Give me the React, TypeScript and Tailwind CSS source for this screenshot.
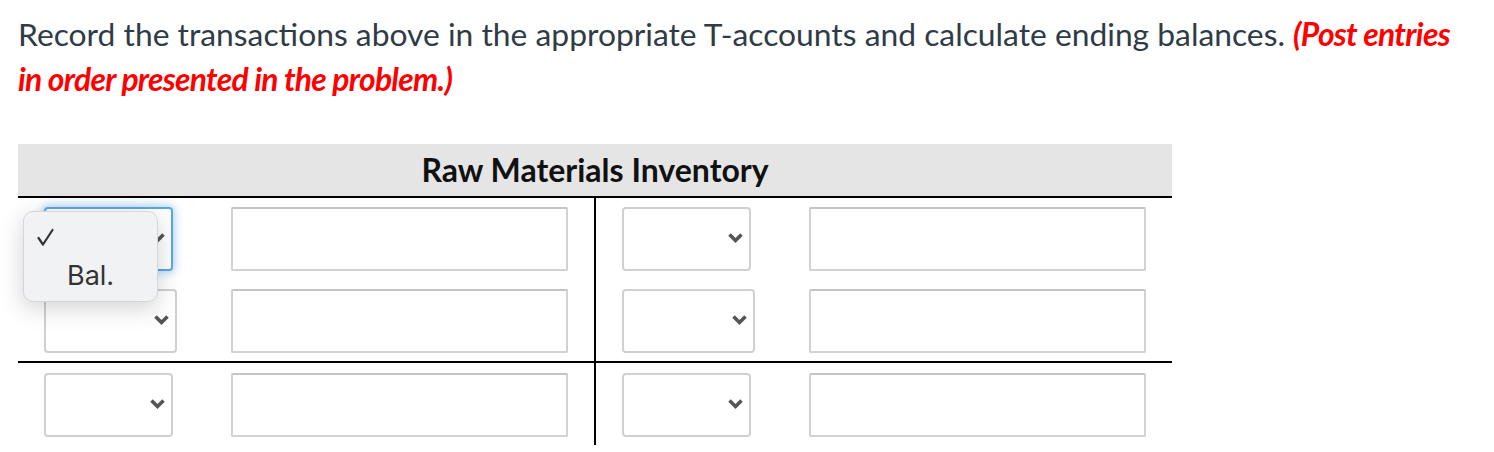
import React from "react";

function Chevron() {
  return (
    <svg width="17" height="12" viewBox="0 0 17 12" className="block">
      <path d="M2.5 2.5 L8.5 8.5 L14.5 2.5" fill="none" stroke="#555" strokeWidth="3.6" strokeLinecap="butt" strokeLinejoin="miter" />
    </svg>
  );
}

function SelectBox({ w = "w-[129px]", focused = false }: { w?: string; focused?: boolean }) {
  return (
    <div
      className={
        focused
          ? `${w} h-[64px] shrink-0 rounded-[4px] border-2 border-[#5aa7e6] bg-white shadow-[0_0_8px_2px_rgba(90,167,230,0.45)] flex items-center justify-end pr-[5px] pb-[2px]`
          : `${w} h-[64px] shrink-0 rounded-[4px] border-2 border-[#d0d0d0] bg-white flex items-center justify-end pr-[5px] pb-[2px]`
      }
    >
      <Chevron />
    </div>
  );
}

function TextBox({ ml }: { ml: string }) {
  return (
    <div className={`${ml} w-[337px] h-[64px] shrink-0 rounded-[2px] border-2 border-[#d2d2d2] border-t-[#c4c4c4] bg-white`} />
  );
}

function Row({ wide = false, focused = false }: { wide?: boolean; focused?: boolean }) {
  return (
    <div className="flex items-start pl-[26px]">
      <SelectBox w={wide ? "w-[133px]" : "w-[129px]"} focused={focused} />
      <TextBox ml={wide ? "ml-[54px]" : "ml-[58px]"} />
    </div>
  );
}

export default function App() {
  return (
    <div className="relative w-[1494px] h-[452px] bg-white overflow-hidden" style={{ fontFamily: "Lato, 'Liberation Sans', sans-serif" }}>
      <p className="ml-[18px] w-[1450px] pt-[12px] text-[31.8px] leading-[45px] text-[#2f3b46]">
        Record the transactions above in the appropriate T-accounts and calculate ending balances.{" "}
        <span className="font-bold italic text-[#ff0000] tracking-[-0.7px]">(Post entries in order presented in the problem.)</span>
      </p>

      <div className="ml-[18px] mt-[42px] w-[1154px]">
        <div className="h-[54px] bg-[#e5e5e5] border-b-2 border-black flex items-center justify-center">
          <span className="text-[32px] font-bold text-[#111] leading-none">Raw Materials Inventory</span>
        </div>

        <div className="grid grid-cols-[578px_576px]">
          <div className="border-r-2 border-black pt-[9px] pb-[8px] flex flex-col gap-[18px]">
            <Row focused />
            <Row wide />
          </div>
          <div className="pt-[9px] pb-[8px] flex flex-col gap-[18px]">
            <Row />
            <Row wide />
          </div>
        </div>

        <div className="border-t-2 border-black grid grid-cols-[578px_576px]">
          <div className="border-r-2 border-black pt-[10px] pb-[8px]">
            <Row />
          </div>
          <div className="pt-[10px] pb-[8px]">
            <Row />
          </div>
        </div>
      </div>

      <div className="absolute left-[23px] top-[211px] w-[135px] h-[91px] rounded-[10px] bg-[#f1f2f4] border border-[#d6d6d8] shadow-[0_6px_24px_rgba(0,0,0,0.18)]">
        <svg width="19" height="19" viewBox="0 0 19 19" className="absolute left-[12px] top-[16px]">
          <path d="M2.5 10 L7 16.5 L16.5 2" fill="none" stroke="#333" strokeWidth="2.2" strokeLinecap="round" strokeLinejoin="round" />
        </svg>
        <span className="absolute left-[43px] top-[48px] text-[27px] leading-[32px] text-[#333]" style={{ fontFamily: "Inter, 'Liberation Sans', sans-serif" }}>
          Bal.
        </span>
      </div>
    </div>
  );
}
